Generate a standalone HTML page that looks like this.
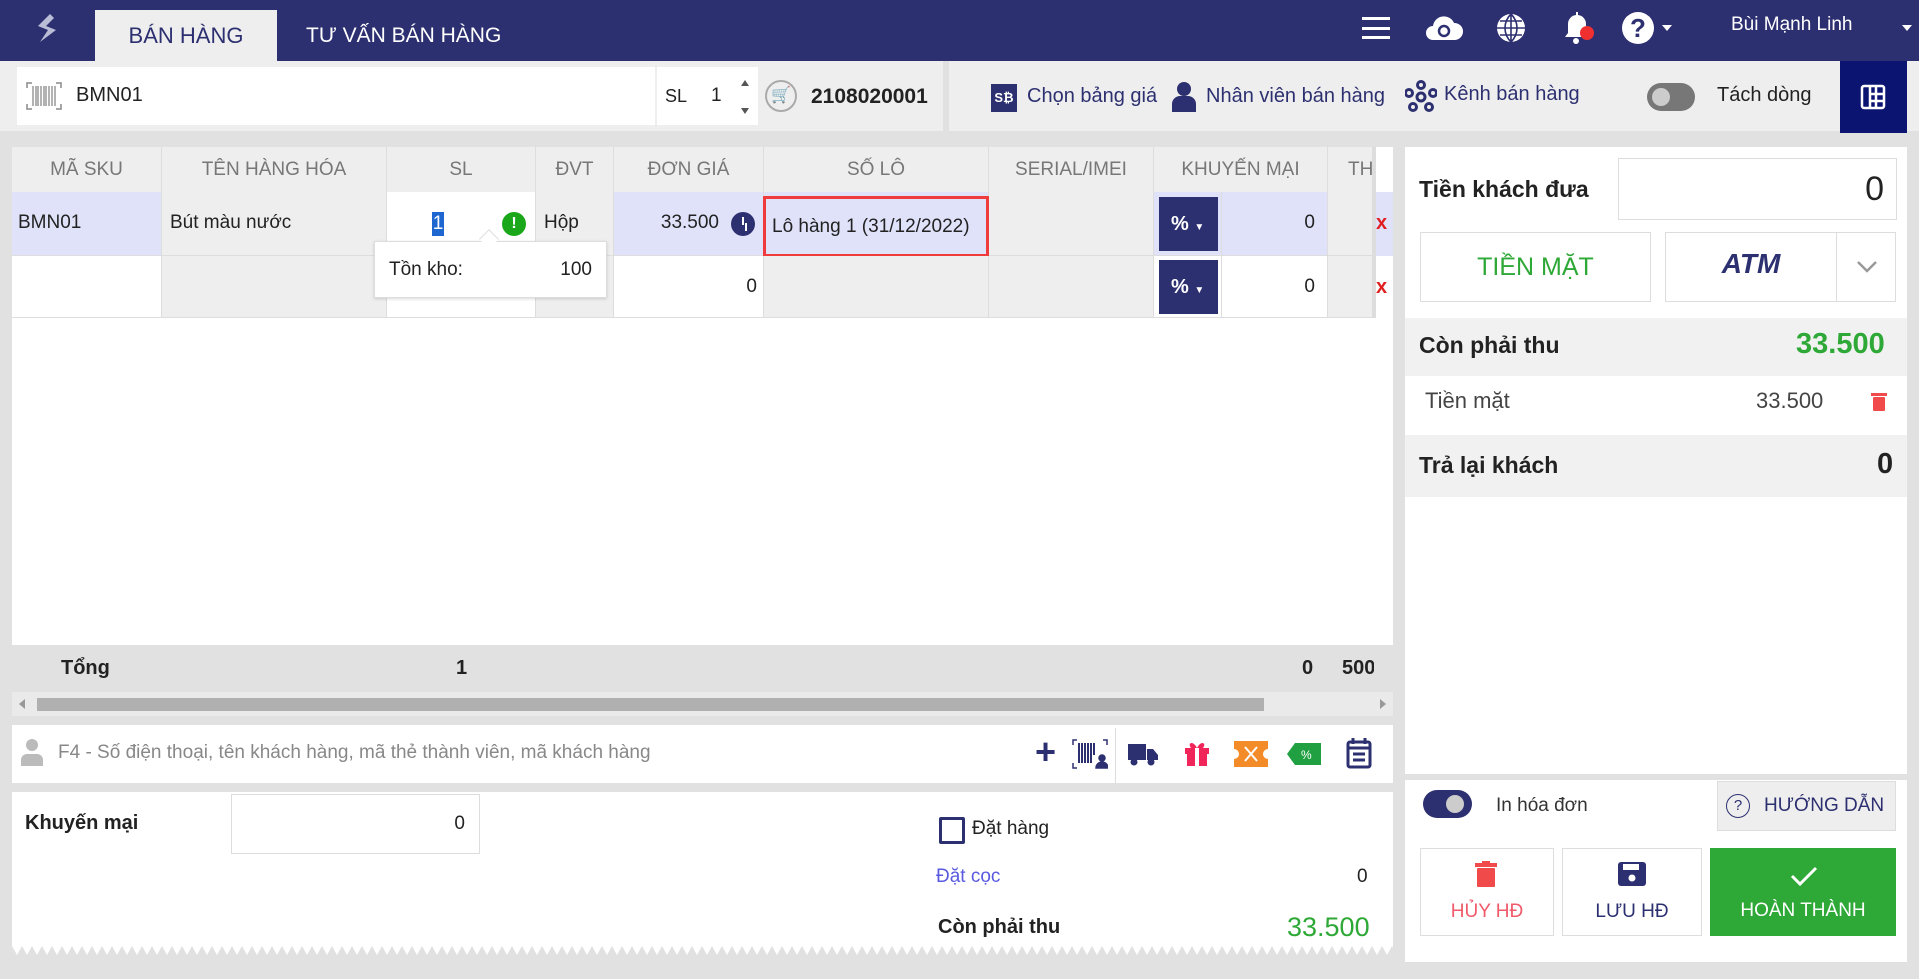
<!DOCTYPE html>
<html><head><meta charset="utf-8"><style>
*{box-sizing:border-box;margin:0;padding:0}
body{width:1919px;height:979px;overflow:hidden;background:#e1e1e1;font-family:"Liberation Sans Narrow","Liberation Sans",sans-serif;color:#222;position:relative}
.a{position:absolute;white-space:nowrap}
.hdr{left:0;top:0;width:1919px;height:61px;background:#2d3070}
.w{background:#fff}
.th{color:#777;font-size:19px;text-align:center;line-height:45px;top:147px;height:45px;border-right:1px solid #ddd}
.c{font-size:19px;border-right:1px solid #ddd;border-bottom:1px solid #ddd}
.sans{font-family:"Liberation Sans",sans-serif}
</style></head><body>
<div class="a hdr"></div>
<svg class="a" style="left:32px;top:12px" width="30" height="36" viewBox="0 0 30 36"><path d="M18 2 L6 14 L16 18 L8 30 L24 18 L14 14 L22 6Z" fill="#b9bdd6"/></svg>
<div class="a" style="left:95px;top:10px;width:182px;height:51px;background:#eee;color:#2d3070;font-size:22px;text-align:center;line-height:52px">BÁN HÀNG</div>
<div class="a" style="left:306px;top:10px;height:51px;color:#fff;font-size:21px;line-height:52px">TƯ VẤN BÁN HÀNG</div>
<div class="a" style="left:1362px;top:17px;width:28px;height:22px;border-top:3px solid #fff;border-bottom:3px solid #fff"><div style="margin-top:6.5px;height:3px;background:#fff"></div></div>
<svg class="a" style="left:1425px;top:12px" width="38" height="32" viewBox="0 0 38 32"><path d="M8 28a7 7 0 0 1 0-14a11 11 0 0 1 21-3a8 8 0 0 1 1 17z" fill="#fff"/><circle cx="19" cy="19" r="5" fill="none" stroke="#2d3070" stroke-width="2.5"/></svg>
<svg class="a" style="left:1495px;top:12px" width="32" height="32" viewBox="0 0 32 32"><circle cx="16" cy="16" r="14" fill="#fff"/><path d="M2 16h28M16 2v28M5 9h22M5 23h22M16 2c-8 8-8 20 0 28M16 2c8 8 8 20 0 28" stroke="#2d3070" stroke-width="1.6" fill="none"/></svg>
<svg class="a" style="left:1563px;top:10px" width="34" height="36" viewBox="0 0 34 36"><path d="M13 2v3a9 9 0 0 0-8 9v9l-3 4h24l-3-4v-9a9 9 0 0 0-8-9V2z" fill="#fff"/><circle cx="13" cy="31" r="3" fill="#fff"/><circle cx="24" cy="23" r="7" fill="#f03030"/></svg>
<div class="a sans" style="left:1622px;top:12px;width:32px;height:32px;border-radius:50%;background:#fff;color:#2d3070;font-weight:bold;font-size:26px;text-align:center;line-height:33px">?</div>
<div class="a" style="left:1662px;top:25px;border:5px solid transparent;border-top:6px solid #fff"></div>
<div class="a" style="left:1731px;top:14px;color:#fff;font-size:19px">Bùi Mạnh Linh</div>
<div class="a" style="left:1902px;top:25px;border:5px solid transparent;border-top:6px solid #fff"></div>

<div class="a" style="left:0;top:61px;width:1919px;height:70px;background:#eee"></div>
<div class="a w" style="left:17px;top:67px;width:638px;height:58px"></div>
<svg class="a" style="left:26px;top:82px" width="36" height="28" viewBox="0 0 36 28"><path d="M1 6V1h5M30 1h5v5M1 22v5h5M30 27h5v-5" stroke="#888" fill="none" stroke-width="1.5"/><path d="M7 4v20M10 4v20M12 4v20M15 4v20M18 4v20M20 4v20M23 4v20M26 4v20M29 4v20" stroke="#888" stroke-width="1.3"/></svg>
<div class="a" style="left:76px;top:84px;font-size:20px">BMN01</div>
<div class="a w" style="left:657px;top:67px;width:101px;height:58px"></div>
<div class="a" style="left:665px;top:86px;font-size:18px">SL</div>
<div class="a" style="left:711px;top:85px;font-size:19px">1</div>
<div class="a" style="left:741px;top:76px;border:4px solid transparent;border-bottom:6px solid #555"></div>
<div class="a" style="left:741px;top:108px;border:4px solid transparent;border-top:6px solid #555"></div>
<div class="a" style="left:765px;top:80px;width:32px;height:32px;border-radius:50%;border:2px solid #aaa;color:#999;font-size:16px;text-align:center;line-height:28px">🛒</div>
<div class="a sans" style="left:811px;top:85px;font-size:21px;font-weight:bold;color:#222">2108020001</div>
<div class="a" style="left:943px;top:61px;width:6px;height:70px;background:#e1e1e1"></div>
<div class="a" style="left:991px;top:84px;width:26px;height:28px;background:#2d3070;color:#fff;font-size:13px;font-weight:bold;text-align:center;line-height:28px">S₿</div>
<div class="a" style="left:1027px;top:85px;font-size:20px;color:#2d3070">Chọn bảng giá</div>
<svg class="a" style="left:1171px;top:80px" width="26" height="32" viewBox="0 0 26 32"><circle cx="13" cy="9" r="7" fill="#2d3070"/><path d="M1 32v-8a8 8 0 0 1 8-8h8a8 8 0 0 1 8 8v8z" fill="#2d3070"/></svg>
<div class="a" style="left:1206px;top:85px;font-size:20px;color:#2d3070">Nhân viên bán hàng</div>
<svg class="a" style="left:1405px;top:80px" width="32" height="32" viewBox="0 0 32 32" fill="none" stroke="#2d3070" stroke-width="3"><circle cx="16" cy="5" r="3.5"/><circle cx="4" cy="13" r="3.5"/><circle cx="28" cy="13" r="3.5"/><circle cx="8" cy="27" r="3.5"/><circle cx="24" cy="27" r="3.5"/><circle cx="16" cy="17" r="4"/></svg>
<div class="a" style="left:1444px;top:83px;font-size:20px;color:#2d3070">Kênh bán hàng</div>
<div class="a" style="left:1647px;top:83px;width:48px;height:28px;border-radius:14px;background:#777"><div style="margin:5px 0 0 5px;width:18px;height:18px;border-radius:50%;background:#ccc"></div></div>
<div class="a" style="left:1717px;top:84px;font-size:20px">Tách dòng</div>
<div class="a" style="left:1840px;top:61px;width:67px;height:72px;background:#0c1472"></div>
<svg class="a" style="left:1860px;top:84px" width="26" height="26" viewBox="0 0 26 26" fill="none" stroke="#fff" stroke-width="2.5"><rect x="2" y="2" width="22" height="22" rx="2"/><path d="M10 2v22M16 2v22M10 10h14M10 17h14"/></svg>

<div class="a" style="left:12px;top:147px;width:1381px;height:498px;background:#fff"></div>
<div class="a" style="left:12px;top:147px;width:1361px;height:45px;background:#eee"></div>
<div class="a th" style="left:12px;width:150px">MÃ SKU</div>
<div class="a th" style="left:162px;width:225px">TÊN HÀNG HÓA</div>
<div class="a th" style="left:387px;width:149px">SL</div>
<div class="a th" style="left:536px;width:78px">ĐVT</div>
<div class="a th" style="left:614px;width:150px">ĐƠN GIÁ</div>
<div class="a th" style="left:764px;width:225px">SỐ LÔ</div>
<div class="a th" style="left:989px;width:165px">SERIAL/IMEI</div>
<div class="a th" style="left:1154px;width:174px">KHUYẾN MẠI</div>
<div class="a th" style="left:1328px;width:45px;text-align:left;padding-left:20px;overflow:hidden">TH</div>
<div class="a" style="left:1373px;top:147px;width:3px;height:171px;background:#ddd"></div>
<div class="a c" style="left:12px;top:192px;width:150px;height:64px;background:#e0e2fa;line-height:62px;padding-left:6px">BMN01</div>
<div class="a c" style="left:162px;top:192px;width:225px;height:64px;background:#eee;line-height:62px;padding-left:8px">Bút màu nước</div>
<div class="a c" style="left:387px;top:192px;width:149px;height:64px;background:#fff"></div>
<div class="a" style="left:432px;top:212px;width:12px;height:24px;background:#1e66d0;color:#fff;font-size:19px;text-align:center;line-height:24px">1</div>
<div class="a" style="left:502px;top:212px;width:24px;height:24px;border-radius:50%;background:#1aa81a;color:#fff;font-weight:bold;font-size:16px;text-align:center;line-height:24px">!</div>
<div class="a c" style="left:536px;top:192px;width:78px;height:64px;background:#eee;line-height:62px;padding-left:8px">Hộp</div>
<div class="a c" style="left:614px;top:192px;width:150px;height:64px;background:#e0e2fa;line-height:62px;text-align:right;padding-right:44px">33.500</div>
<div class="a" style="left:731px;top:212px;width:24px;height:24px;border-radius:50%;background:#2d3070"><div style="margin:5px 0 0 11px;width:2px;height:8px;background:#fff;box-shadow:3px 6px 0 -0px #fff"></div></div>
<div class="a c" style="left:764px;top:192px;width:225px;height:64px;background:#e0e2fa"></div>
<div class="a" style="left:763px;top:196px;width:226px;height:61px;border:3px solid #ef3b3b;font-size:19px;line-height:55px;padding-left:6px">Lô hàng 1 (31/12/2022)</div>
<div class="a c" style="left:989px;top:192px;width:165px;height:64px;background:#eee"></div>
<div class="a c" style="left:1154px;top:192px;width:68px;height:64px;background:#e0e2fa"></div>
<div class="a" style="left:1159px;top:197px;width:59px;height:54px;background:#2d3070;color:#fff;font-weight:bold;font-size:20px;line-height:54px;padding-left:12px">% <span style="font-size:10px">▼</span></div>
<div class="a c" style="left:1222px;top:192px;width:106px;height:64px;background:#e0e2fa;line-height:62px;text-align:right;padding-right:12px">0</div>
<div class="a c" style="left:1328px;top:192px;width:45px;height:64px;background:#eee"></div>
<div class="a" style="left:1376px;top:192px;width:17px;height:64px;background:#e0e2fa;color:#e02020;font-size:20px;font-weight:bold;line-height:62px">x</div>
<div class="a c" style="left:12px;top:256px;width:150px;height:62px;background:#fff"></div>
<div class="a c" style="left:162px;top:256px;width:225px;height:62px;background:#eee"></div>
<div class="a c" style="left:387px;top:256px;width:149px;height:62px;background:#fff"></div>
<div class="a c" style="left:536px;top:256px;width:78px;height:62px;background:#eee"></div>
<div class="a c" style="left:614px;top:256px;width:150px;height:62px;background:#fff;line-height:62px;text-align:right;padding-right:6px">0</div>
<div class="a c" style="left:764px;top:256px;width:225px;height:62px;background:#eee"></div>
<div class="a c" style="left:989px;top:256px;width:165px;height:62px;background:#eee"></div>
<div class="a c" style="left:1154px;top:256px;width:68px;height:62px;background:#fff"></div>
<div class="a" style="left:1159px;top:260px;width:59px;height:54px;background:#2d3070;color:#fff;font-weight:bold;font-size:20px;line-height:54px;padding-left:12px">% <span style="font-size:10px">▼</span></div>
<div class="a c" style="left:1222px;top:256px;width:106px;height:62px;background:#fff;line-height:62px;text-align:right;padding-right:12px">0</div>
<div class="a c" style="left:1328px;top:256px;width:45px;height:62px;background:#eee"></div>
<div class="a" style="left:1376px;top:256px;width:17px;height:62px;color:#e02020;font-size:20px;font-weight:bold;line-height:62px">x</div>
<div class="a" style="left:374px;top:241px;width:233px;height:57px;background:#fff;border:1px solid #ddd;box-shadow:0 1px 3px rgba(0,0,0,.15);font-size:19px;line-height:55px;padding:0 14px"><span>Tồn kho:</span><span style="float:right">100</span></div>
<div class="a" style="left:482px;top:232px;width:14px;height:14px;background:#fff;transform:rotate(45deg);border-left:1px solid #ddd;border-top:1px solid #ddd"></div>
<div class="a" style="left:12px;top:645px;width:1381px;height:47px;background:#e1e1e1"></div>
<div class="a" style="left:61px;top:657px;font-size:20px;font-weight:bold">Tổng</div>
<div class="a" style="left:456px;top:657px;font-size:20px;font-weight:bold">1</div>
<div class="a" style="left:1302px;top:657px;font-size:20px;font-weight:bold">0</div>
<div class="a" style="left:1342px;top:657px;font-size:20px;font-weight:bold;width:32px;overflow:hidden">500</div>
<div class="a" style="left:12px;top:692px;width:1381px;height:24px;background:#eaeaea"></div>
<div class="a" style="left:37px;top:698px;width:1227px;height:13px;background:#b0b0b0"></div>
<div class="a" style="left:19px;top:699px;border:5px solid transparent;border-right:6px solid #999;border-left:0"></div>
<div class="a" style="left:1380px;top:699px;border:5px solid transparent;border-left:6px solid #999;border-right:0"></div>
<div class="a w" style="left:12px;top:725px;width:1381px;height:58px"></div>
<svg class="a" style="left:20px;top:738px" width="24" height="28" viewBox="0 0 24 28" fill="#bbb"><circle cx="12" cy="7" r="6"/><path d="M1 28v-6a6 6 0 0 1 6-6h10a6 6 0 0 1 6 6v6z"/></svg>
<div class="a" style="left:58px;top:742px;font-size:19px;color:#888">F4 - Số điện thoại, tên khách hàng, mã thẻ thành viên, mã khách hàng</div>
<div class="a" style="left:1035px;top:728px;font-size:36px;color:#2d3070;font-weight:bold;line-height:48px">+</div>
<svg class="a" style="left:1072px;top:739px" width="36" height="30" viewBox="0 0 36 30" stroke="#2d3070" fill="none" stroke-width="1.5"><path d="M1 6V1h4M1 24v5h4M31 1h4v5"/><path d="M7 4v20M10 4v20M13 4v20M16 4v20M19 4v20M22 4v12" stroke-width="2"/><circle cx="30" cy="19" r="3" fill="#2d3070"/><path d="M24 29a6 6 0 0 1 12 0z" fill="#2d3070"/></svg>
<div class="a" style="left:1115px;top:728px;width:1px;height:55px;background:#ddd"></div>
<svg class="a" style="left:1128px;top:742px" width="30" height="24" viewBox="0 0 30 24" fill="#2d3070"><rect x="0" y="2" width="18" height="16"/><path d="M19 7h6l5 6v5H19z"/><circle cx="6" cy="20" r="3.5"/><circle cx="23" cy="20" r="3.5"/></svg>
<svg class="a" style="left:1183px;top:739px" width="28" height="28" viewBox="0 0 28 28" fill="#f0265a"><rect x="2" y="9" width="24" height="6"/><rect x="4" y="15" width="20" height="12"/><rect x="12" y="9" width="4" height="18" fill="#fff"/><path d="M14 9c-4-8-10-5-6 0zM14 9c4-8 10-5 6 0z"/></svg>
<svg class="a" style="left:1234px;top:741px" width="34" height="26" viewBox="0 0 34 26"><rect x="0" y="0" width="34" height="26" fill="#f28b28"/><path d="M0 8a5 5 0 0 1 0 10zM34 8a5 5 0 0 0 0 10z" fill="#fff"/><path d="M11 6l12 14M23 6L11 20" stroke="#fff" stroke-width="2"/></svg>
<svg class="a" style="left:1287px;top:743px" width="34" height="22" viewBox="0 0 34 22"><path d="M8 0h26v22H8L0 11z" fill="#20a040"/><text x="14" y="16" font-size="12" fill="#fff" font-family="Liberation Sans">%</text></svg>
<svg class="a" style="left:1346px;top:737px" width="26" height="32" viewBox="0 0 26 32" fill="none" stroke="#2d3070" stroke-width="3"><rect x="2" y="5" width="22" height="25" rx="2"/><path d="M7 1v6M19 1v6M2 11h22M7 17h12M7 23h12"/></svg>
<div class="a w" style="left:12px;top:792px;width:1381px;height:160px"></div>
<svg class="a" style="left:12px;top:946px" width="1381" height="10"><defs><pattern id="z" width="10" height="10" patternUnits="userSpaceOnUse"><path d="M0 0L5 9L10 0z" fill="#fff"/></pattern></defs><rect width="1381" height="10" fill="#e1e1e1"/><rect width="1381" height="10" fill="url(#z)"/></svg>
<div class="a" style="left:25px;top:812px;font-size:20px;font-weight:bold">Khuyến mại</div>
<div class="a w" style="left:231px;top:794px;width:249px;height:60px;border:1px solid #ddd;font-size:19px;text-align:right;padding-right:14px;line-height:58px">0</div>
<div class="a" style="left:939px;top:817px;width:26px;height:27px;border:3px solid #2d3070;border-radius:2px"></div>
<div class="a" style="left:972px;top:818px;font-size:19px">Đặt hàng</div>
<div class="a" style="left:936px;top:866px;font-size:19px;color:#5a5ae0">Đặt cọc</div>
<div class="a" style="left:1357px;top:866px;font-size:19px">0</div>
<div class="a" style="left:938px;top:916px;font-size:20px;font-weight:bold">Còn phải thu</div>
<div class="a" style="left:1287px;top:912px;font-size:27px;color:#2ea836">33.500</div>
<div class="a w" style="left:1405px;top:147px;width:502px;height:627px"></div>
<div class="a" style="left:1419px;top:176px;font-size:23px;font-weight:bold">Tiền khách đưa</div>
<div class="a w sans" style="left:1618px;top:158px;width:279px;height:62px;border:1px solid #ddd;font-size:34px;text-align:right;padding-right:12px;line-height:60px">0</div>
<div class="a w" style="left:1420px;top:232px;width:231px;height:70px;border:1px solid #ddd;color:#2ea836;font-size:25px;text-align:center;line-height:68px">TIỀN MẶT</div>
<div class="a w" style="left:1665px;top:232px;width:172px;height:70px;border:1px solid #ddd;color:#2d3070;font-size:28px;font-weight:bold;font-style:italic;text-align:center;line-height:62px">ATM</div>
<div class="a w" style="left:1836px;top:232px;width:60px;height:70px;border:1px solid #ddd"></div>
<svg class="a" style="left:1856px;top:260px" width="22" height="14"><path d="M2 2l9 9l9-9" stroke="#999" stroke-width="2.5" fill="none"/></svg>
<div class="a" style="left:1405px;top:318px;width:502px;height:58px;background:#f1f1f1"></div>
<div class="a sans" style="left:1419px;top:332px;font-size:23px;font-weight:bold">Còn phải thu</div>
<div class="a sans" style="left:1796px;top:328px;font-size:29px;font-weight:bold;color:#2ea836">33.500</div>
<div class="a sans" style="left:1425px;top:388px;font-size:22px;color:#444">Tiền mặt</div>
<div class="a sans" style="left:1756px;top:388px;font-size:22px;color:#444">33.500</div>
<svg class="a" style="left:1871px;top:391px" width="16" height="20" viewBox="0 0 16 20" fill="#f04a4a"><rect x="0" y="2" width="16" height="3"/><rect x="2" y="6" width="12" height="14" rx="1"/></svg>
<div class="a" style="left:1405px;top:435px;width:502px;height:62px;background:#f1f1f1"></div>
<div class="a sans" style="left:1419px;top:452px;font-size:23px;font-weight:bold">Trả lại khách</div>
<div class="a sans" style="left:1877px;top:448px;font-size:29px;font-weight:bold">0</div>
<div class="a w" style="left:1405px;top:780px;width:502px;height:182px"></div>
<div class="a" style="left:1423px;top:790px;width:49px;height:28px;border-radius:14px;background:#2d3070"><div style="margin:5px 0 0 23px;width:18px;height:18px;border-radius:50%;background:#ccc"></div></div>
<div class="a sans" style="left:1496px;top:795px;font-size:19px;color:#333">In hóa đơn</div>
<div class="a sans" style="left:1717px;top:781px;width:179px;height:50px;background:#eee;border:1px solid #ddd;color:#2d3070;font-size:19px;line-height:48px;padding-left:46px">HƯỚNG DẪN</div>
<div class="a" style="left:1726px;top:794px;width:24px;height:24px;border-radius:50%;border:1.5px solid #2d3070;color:#2d3070;font-size:15px;text-align:center;line-height:21px">?</div>
<div class="a w sans" style="left:1420px;top:848px;width:134px;height:88px;border:1px solid #ddd;color:#f05a6a;font-size:19px;text-align:center;padding-top:52px">HỦY HĐ</div>
<svg class="a" style="left:1475px;top:861px" width="22" height="26" viewBox="0 0 22 26" fill="#f04a4a"><rect x="0" y="2" width="22" height="4"/><rect x="7" y="0" width="8" height="3"/><rect x="2" y="7" width="18" height="19" rx="1"/></svg>
<div class="a w sans" style="left:1562px;top:848px;width:140px;height:88px;border:1px solid #ddd;color:#2d3070;font-size:19px;text-align:center;padding-top:52px">LƯU HĐ</div>
<svg class="a" style="left:1618px;top:862px" width="28" height="24" viewBox="0 0 28 24"><rect width="28" height="24" rx="3" fill="#2d3070"/><rect x="5" y="2" width="16" height="6" fill="#fff"/><circle cx="14" cy="16" r="3.5" fill="#fff"/></svg>
<div class="a sans" style="left:1710px;top:848px;width:186px;height:88px;background:#2ea836;color:#fff;font-size:19px;text-align:center;padding-top:52px">HOÀN THÀNH</div>
<svg class="a" style="left:1790px;top:866px" width="28" height="20"><path d="M2 10l8 8l16-16" stroke="#fff" stroke-width="3" fill="none"/></svg>
</body></html>
